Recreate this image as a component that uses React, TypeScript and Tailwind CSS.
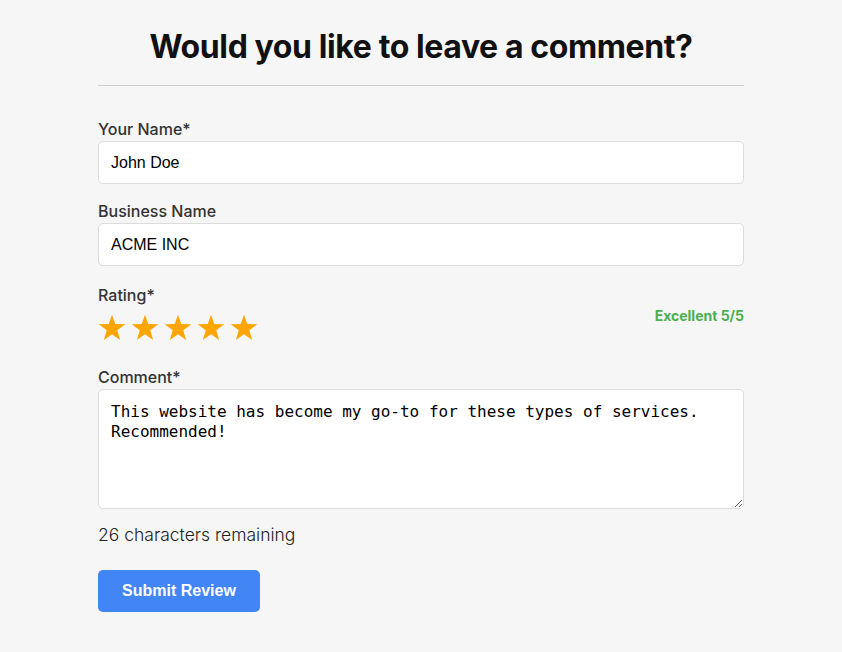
import { useState } from "react"

const Star = () => (
  <svg width="28" height="27" viewBox="0 0 24 23" className="block">
    <polygon
      points="12,0.5 14.8,8.6 23.4,8.7 16.5,13.9 19,22.3 12,17.3 5,22.3 7.5,13.9 0.6,8.7 9.2,8.6"
      fill="#ffa500"
    />
  </svg>
)

export default function App() {
  const [name, setName] = useState("John Doe")
  const [business, setBusiness] = useState("ACME INC")
  const [comment, setComment] = useState(
    "This website has become my go-to for these types of services. Recommended!"
  )
  const remaining = 100 - comment.length

  const labelCls = "block text-[16px] leading-6 font-medium text-[#333]"
  const inputCls =
    "w-full h-[43px] px-3 bg-white border border-[#dcdcdc] rounded-[5px] text-[16px] text-black outline-none font-['Liberation_Sans',Arial,sans-serif]"

  return (
    <div className="min-h-screen w-full bg-[#f6f6f6] font-['Inter',sans-serif]">
      <div className="w-[646px] mx-auto pt-[27px]">
        <h1 className="text-center text-[32px] leading-10 font-bold text-[#111] tracking-[-0.4px]">
          Would you like to leave a comment?
        </h1>
        <div className="mt-[18px] h-px bg-[#cfcfcf]" />

        <div className="mt-[31px] flex flex-col">
          <label className={labelCls}>Your Name*</label>
          <input className={inputCls} value={name} onChange={e => setName(e.target.value)} />

          <label className={`${labelCls} mt-[15px]`}>Business Name</label>
          <input className={inputCls} value={business} onChange={e => setBusiness(e.target.value)} />

          <label className={`${labelCls} mt-[17px]`}>Rating*</label>
          <div className="flex justify-between items-start mt-[6px] h-[35px]">
            <div className="flex gap-[5px] mt-[1px]">
              <Star />
              <Star />
              <Star />
              <Star />
              <Star />
            </div>
            <span className="text-[14px] leading-5 font-bold text-[#4caf50] -mt-[7px]">Excellent 5/5</span>
          </div>

          <label className={`${labelCls} mt-[17px]`}>Comment*</label>
          <textarea
            className="w-full h-[120px] px-3 pt-[12px] pb-[8px] bg-white border border-[#dcdcdc] rounded-[5px] text-[16px] leading-5 text-black outline-none font-['DejaVu_Sans_Mono',monospace]"
            value={comment}
            onChange={e => setComment(e.target.value)}
          />

          <p className="mt-[14px] text-[17.5px] leading-6 font-light text-[#222]">
            {remaining} characters remaining
          </p>

          <div className="mt-[23px]">
            <button className="w-[162px] h-[42px] bg-[#4285f4] text-white rounded-[5px] text-[16px] font-bold font-['Liberation_Sans',Arial,sans-serif]">
              Submit Review
            </button>
          </div>
        </div>
      </div>
    </div>
  )
}
